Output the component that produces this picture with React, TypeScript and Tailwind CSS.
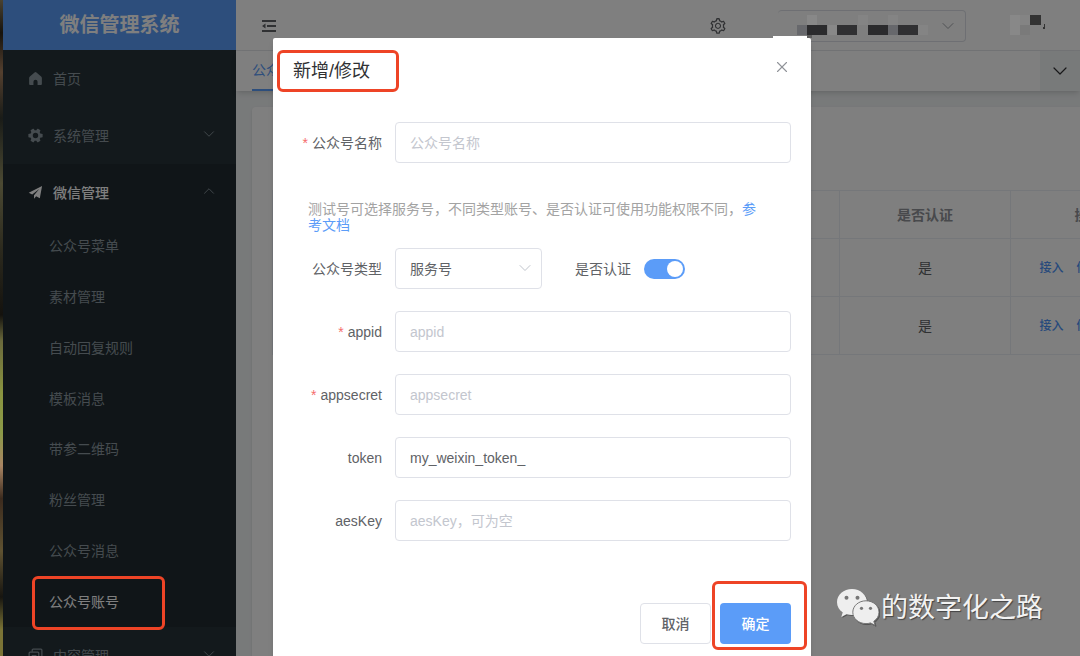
import { useState } from 'react'
import type { ReactNode } from 'react'
import { AiOutlineSetting } from 'react-icons/ai'
import { ChevronDown, ChevronUp, X } from 'lucide-react'

const subMenu = [
  '公众号菜单',
  '素材管理',
  '自动回复规则',
  '模板消息',
  '带参二维码',
  '粉丝管理',
  '公众号消息',
  '公众号账号',
]

const inputClass =
  'h-[41px] w-full rounded border border-[#dfe1e8] bg-white px-[14px] text-sm text-[#606266] outline-none placeholder:text-[#c3c6ce] focus:border-[#5b9cf8]'

function HomeIcon() {
  return (
    <svg viewBox="0 0 16 16" className="size-[15px]" fill="currentColor">
      <path d="M7 1.600a1.500 1.500 0 0 1 2 0l5 4.300c.5.4.8 1 .8 1.600v6.400c0 .6-.4 1-1 1h-3.600v-3.400a2.200 2.200 0 0 0-4.400 0v3.400H2.200c-.6 0-1-.4-1-1V7.500c0-.6.3-1.200.8-1.600z" />
    </svg>
  )
}

function CogIcon() {
  return (
    <svg viewBox="0 0 16 16" className="size-[15px]" fill="currentColor">
      <circle cx="8" cy="8" r="4.300" fill="none" stroke="currentColor" strokeWidth="2.800" />
      {[0, 60, 120, 180, 240, 300].map((angle) => (
        <rect key={angle} x="12.300" y="6" width="3.300" height="4" rx=".8" transform={`rotate(${angle} 8 8)`} />
      ))}
    </svg>
  )
}

function PlaneIcon() {
  return (
    <svg viewBox="0 0 16 16" className="size-[15px]" fill="currentColor">
      <path d="M15 1 .8 8.200l3.700 1.900L12 4.300l-5.600 6.600v3.800l2.300-2.600 3.900 2z" />
    </svg>
  )
}

function CopyIcon() {
  return (
    <svg viewBox="0 0 16 16" className="size-[15px]" fill="none" stroke="currentColor" strokeWidth="1.300">
      <path d="M4.500 4V2.200c0-.6.4-1 1-1h8.300c.6 0 1 .4 1 1v8.300c0 .6-.4 1-1 1H12" />
      <rect x="1.200" y="4.500" width="10.300" height="10.300" rx="1" />
      <path d="M4 8h5M4 11h5" />
    </svg>
  )
}

function FoldIcon() {
  return (
    <svg viewBox="0 0 14 12" className="h-3 w-3.5" fill="currentColor">
      <path d="M0 0h14v2H0zM5 5h9v2H5zM0 10h14v2H0zM0 6l3.500-2.500v5z" />
    </svg>
  )
}

function WechatIcon() {
  return (
    <svg viewBox="0 0 42 37" className="h-[37px] w-[42px] drop-shadow-[1px_1px_0px_#555]">
      <path
        fill="#eee"
        d="M15 0C6.700 0 0 5.900 0 13.200c0 4.200 2.200 7.800 5.700 10.200L4.300 28l5.200-2.700c1.800.5 3.600.8 5.500.8 8.300 0 15-5.800 15-12.900S23.300 0 15 0z"
      />
      <path
        fill="#eee"
        stroke="#777"
        d="M29 11.800c-7.300 0-13.200 5-13.200 11.400S21.700 34.600 29 34.600c1.600 0 3.100-.2 4.500-.7l4.500 2.400-1.200-4c3.200-2.100 5.200-5.400 5.200-9.100 0-6.400-5.700-11.400-13-11.400z"
      />
      <g fill="#777">
        <circle cx="9.500" cy="8.800" r="2" />
        <circle cx="20.500" cy="8.800" r="2" />
        <circle cx="24.500" cy="19.300" r="1.600" />
        <circle cx="33.500" cy="19.300" r="1.600" />
      </g>
    </svg>
  )
}

/* Pixelated blocks that hide the account name in the top bar */
function Mosaic() {
  return (
    <svg viewBox="0 0 144 24" className="absolute bottom-0.5 left-2 z-20 h-6 w-36" shapeRendering="crispEdges">
      <g fill="#888">
        <rect x="21" y="0" width="10" height="10" />
        <rect x="72" y="0" width="10" height="10" fill="#848484" />
        <rect x="102" y="0" width="10" height="10" fill="#848484" />
        <rect x="42" y="10" width="9" height="10" />
        <rect x="132" y="10" width="10" height="10" fill="#848484" />
      </g>
      <g fill="#67686c">
        <rect x="11" y="10" width="10" height="10" />
        <rect x="102" y="10" width="10" height="10" />
      </g>
      <rect x="21" y="10" width="20" height="10" fill="#2b2b2d" />
      <rect x="51" y="10" width="20" height="10" fill="#303032" />
      <rect x="82" y="10" width="20" height="10" fill="#2b2b2d" />
      <rect x="112" y="10" width="20" height="10" fill="#303032" />
      <rect x="21" y="20" width="5" height="3" fill="#5c5c5c" />
    </svg>
  )
}

interface MenuRowProps {
  icon: ReactNode
  label: string
  arrow?: 'up' | 'down'
  active?: boolean
}

function MenuRow({ icon, label, arrow, active }: MenuRowProps) {
  return (
    <button
      className={`flex h-[57px] w-full shrink-0 items-center gap-2.5 pr-[18px] pl-[25px] text-sm ${
        active ? 'font-medium text-white' : 'text-[#8a979e]'
      }`}
    >
      {icon}
      <span>{label}</span>
      {arrow === 'down' && <ChevronDown className="mb-1 ml-auto size-[18px] text-[#8a979e]" strokeWidth={1.2} />}
      {arrow === 'up' && <ChevronUp className="mb-1 ml-auto size-[18px] text-[#8a979e]" strokeWidth={1.2} />}
    </button>
  )
}

function Sidebar() {
  return (
    <aside className="flex w-[233px] shrink-0 flex-col bg-[#263238]">
      <h1 className="flex h-[50px] shrink-0 items-center justify-center bg-[#5b9cf8] text-xl font-bold text-white">
        微信管理系统
      </h1>
      <MenuRow icon={<HomeIcon />} label="首页" />
      <MenuRow icon={<CogIcon />} label="系统管理" arrow="down" />
      <div className="bg-[#202a30]">
        <MenuRow icon={<PlaneIcon />} label="微信管理" arrow="up" active />
        <ul className="grid h-[406px] auto-rows-fr">
          {subMenu.map((name) => {
            const current = name === '公众号账号'
            return (
              <li key={name} className="relative">
                <a
                  href="#"
                  className={`flex h-full items-center pl-[46px] text-sm ${current ? 'text-white' : 'text-[#8a979e]'}`}
                >
                  {name}
                </a>
                {current && (
                  <div className="pointer-events-none absolute top-0 left-[29px] z-20 h-[54px] w-[133px] rounded-md border-3 border-[#ee4426]" />
                )}
              </li>
            )
          })}
        </ul>
      </div>
      <MenuRow icon={<CopyIcon />} label="内容管理" arrow="down" />
    </aside>
  )
}

function TopBar() {
  return (
    <header className="flex h-[51px] shrink-0 items-center border-b border-[#e4e6ea] bg-white pt-0.5 pr-[34px] pl-[26px] text-[#606266]">
      <button aria-label="fold">
        <FoldIcon />
      </button>
      <button aria-label="settings" className="ml-auto">
        <AiOutlineSetting className="size-[18px]" />
      </button>
      <div className="relative ml-[51px] flex h-8 w-[188px] items-center justify-end rounded border border-l-0 border-[#dcdfe6] pr-[7px]">
        <Mosaic />
        <ChevronDown className="size-5 text-[#a0a3a9]" strokeWidth={1.2} />
      </div>
      <svg viewBox="0 0 36 22" className="relative z-20 ml-11 h-[22px] w-9" shapeRendering="crispEdges">
        <rect x="0" y="0" width="10" height="20" fill="#888" />
        <rect x="10" y="0" width="10" height="10" fill="#848484" />
        <rect x="10" y="10" width="10" height="10" fill="#7a7a7a" />
        <rect x="20" y="0" width="11" height="10" fill="#333" />
        <path d="M33 14l2-7v7z" fill="#333" />
      </svg>
    </header>
  )
}

function AccountTable() {
  return (
    <table className="w-[895px] table-fixed border-collapse text-center text-sm text-[#606266]">
      <colgroup>
        <col />
        <col className="w-[171px]" />
        <col className="w-[156px]" />
      </colgroup>
      <thead>
        <tr className="h-12 text-[#909399]">
          <th className="border border-[#ebeef5]" />
          <th className="border border-[#ebeef5] font-bold">是否认证</th>
          <th className="border border-[#ebeef5] font-bold">操作</th>
        </tr>
      </thead>
      <tbody>
        {[1, 2].map((row) => (
          <tr key={row} className="h-[58px]">
            <td className="border border-[#ebeef5]" />
            <td className="border border-[#ebeef5]">是</td>
            <td className="border border-[#ebeef5]">
              <div className="flex justify-center gap-[13px] text-xs font-medium text-[#4f95f8]">
                <button>接入</button>
                <button>修改</button>
                <button>删除</button>
              </div>
            </td>
          </tr>
        ))}
      </tbody>
    </table>
  )
}

interface FieldProps {
  id: string
  label: string
  required?: boolean
  children: ReactNode
}

function Field({ id, label, required, children }: FieldProps) {
  return (
    <div className="flex flex-1 items-center">
      <label htmlFor={id} className="w-[102px] shrink-0 pr-[13px] text-right text-sm text-[#606266]">
        {required && <span className="mr-1 text-[#f56c6c]">*</span>}
        {label}
      </label>
      {children}
    </div>
  )
}

function AccountDialog() {
  const [name, setName] = useState('')
  const [type, setType] = useState('服务号')
  const [verified, setVerified] = useState(true)
  const [appid, setAppid] = useState('')
  const [appsecret, setAppsecret] = useState('')
  const [token, setToken] = useState('my_weixin_token_')
  const [aesKey, setAesKey] = useState('')

  return (
    <div role="dialog" className="relative mx-auto mt-[38px] min-h-full w-1/2 rounded-xs bg-white px-5 shadow-md">
      <div className="absolute -top-0.5 right-1 h-0.5 w-[34px] bg-white" />
      <div className="flex h-[84px] items-start justify-between">
        <div className="relative flex h-[66px] items-center">
          <h2 className="text-lg text-[#303133]">新增/修改</h2>
          <div className="pointer-events-none absolute top-3 -left-4 h-[42px] w-[122px] rounded-md border-3 border-[#ee4426]" />
        </div>
        <button aria-label="close" className="mt-5 text-[#909399]">
          <X className="size-[18px]" strokeWidth={1.5} />
        </button>
      </div>

      <form className="flex flex-col gap-[22px]">
        <Field id="name" label="公众号名称" required>
          <input id="name" className={inputClass} placeholder="公众号名称" value={name} onChange={(e) => setName(e.target.value)} />
        </Field>

        <p className="mt-4 -mb-[7px] pr-6 pl-[15px] text-sm leading-4 text-[#a3a3a3]">
          测试号可选择服务号，不同类型账号、是否认证可使用功能权限不同，
          <a href="#" className="text-[#5b9cf8]">参考文档</a>
        </p>

        <div className="flex">
          <Field id="type" label="公众号类型">
            <div className="relative flex-1">
              <select id="type" className={`${inputClass} appearance-none`} value={type} onChange={(e) => setType(e.target.value)}>
                <option>服务号</option>
                <option>订阅号</option>
              </select>
              <ChevronDown className="pointer-events-none absolute top-2.5 right-[7px] size-5 text-[#c0c4cc]" strokeWidth={1.2} />
            </div>
          </Field>
          <Field id="verified" label="是否认证">
            <input
              id="verified"
              type="checkbox"
              role="switch"
              checked={verified}
              onChange={(e) => setVerified(e.target.checked)}
              className="h-5 w-[41px] appearance-none rounded-full bg-[#c0c4cc] p-0.5 before:block before:size-4 before:rounded-full before:bg-white checked:bg-[#5b9cf8] checked:before:ml-auto"
            />
          </Field>
        </div>

        <Field id="appid" label="appid" required>
          <input id="appid" className={inputClass} placeholder="appid" value={appid} onChange={(e) => setAppid(e.target.value)} />
        </Field>
        <Field id="appsecret" label="appsecret" required>
          <input id="appsecret" className={inputClass} placeholder="appsecret" value={appsecret} onChange={(e) => setAppsecret(e.target.value)} />
        </Field>
        <Field id="token" label="token">
          <input id="token" className={inputClass} value={token} onChange={(e) => setToken(e.target.value)} />
        </Field>
        <Field id="aesKey" label="aesKey">
          <input id="aesKey" className={inputClass} placeholder="aesKey，可为空" value={aesKey} onChange={(e) => setAesKey(e.target.value)} />
        </Field>
      </form>

      <div className="mt-[62px] flex justify-end gap-[9px] text-sm font-medium">
        <button className="h-[41px] w-[71px] rounded border border-[#dfe1e8] text-[#606266]">取消</button>
        <div className="relative">
          <button className="h-[41px] w-[71px] rounded bg-[#5b9cf8] text-white">确定</button>
          <div className="pointer-events-none absolute -top-[22px] -left-2 h-[69px] w-[95px] rounded-md border-3 border-[#ee4426]" />
        </div>
      </div>
    </div>
  )
}

export default function App() {
  return (
    <div className="flex h-screen overflow-hidden font-['Liberation_Sans','Noto_Sans_CJK_SC',sans-serif]">
      {/* Desktop wallpaper behind the window */}
      <div className="w-[3px] shrink-0 bg-[linear-gradient(#4a4231_0%,#17130d_5%,#54402f_11%,#1a1c18_18%,#4c4a33_28%,#2c2a1e_38%,#14120e_48%,#6b6a3c_52%,#8a9440_60%,#8c9a48_66%,#a98563_71%,#3c2b1e_76%,#5f5231_84%,#171510_91%,#7b7436_96%)]" />

      <div className="relative flex min-w-0 flex-1 overflow-hidden">
        <Sidebar />
        <main className="flex min-w-0 flex-1 flex-col bg-[#f1f4f5]">
          <TopBar />
          <nav className="flex h-10 shrink-0 justify-between bg-white pl-4 shadow-md">
            <button className="border-b-2 border-[#5b9cf8] text-sm text-[#5b9cf8]">公众号账号</button>
            <button aria-label="more tabs" className="flex w-10 items-center justify-center bg-[#f1f4f5] text-[#303133]">
              <ChevronDown className="size-6" strokeWidth={1.2} />
            </button>
          </nav>
          <section className="mt-4 ml-4 flex-1 overflow-hidden rounded-tl bg-white pt-[83px] pl-5 shadow">
            <AccountTable />
          </section>
        </main>

        <div className="absolute inset-0 z-10 overflow-hidden bg-black/50 pl-px">
          <AccountDialog />
        </div>

        {/* Watermark */}
        <div className="absolute right-[37px] bottom-7 z-20 flex items-center gap-0.5">
          <WechatIcon />
          <span className="text-[27px] text-[#f2f2f2] [text-shadow:1px_1px_1px_#444]">的数字化之路</span>
        </div>
      </div>
    </div>
  )
}
